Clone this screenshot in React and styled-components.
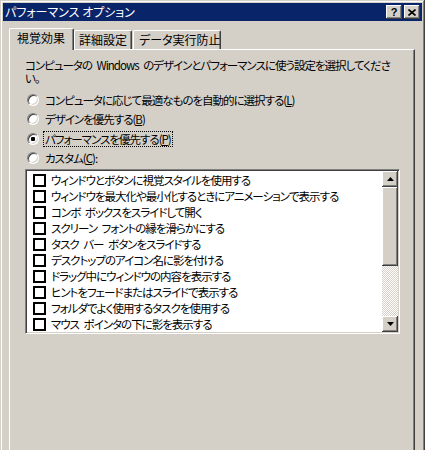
import React from 'react';
import styled, { createGlobalStyle, css } from 'styled-components';

const Global = createGlobalStyle`
html, body {
  margin: 0;
  padding: 0;
  overflow: hidden;
  background: #d4d0c8;
}
body {
  font-family: "Noto Sans CJK JP", "DejaVu Sans", sans-serif;
  font-size: 12px;
  font-feature-settings: "palt";
  color: #000;
}
`;

const raised = css`
box-shadow: inset -1px -1px #404040, inset 1px 1px #fff, inset -2px -2px #808080, inset 2px 2px #d4d0c8;
`;

const Window = styled.div`
box-sizing: border-box;
display: flex;
flex-direction: column;
width: 425px;
height: 450px;
overflow: hidden;
padding: 3px 3px 0;
background: #d4d0c8;
box-shadow: inset -1px 0 #404040, inset 0 1px #d4d0c8, inset -2px 0 #808080, inset 1px 0 #d4d0c8, inset 2px 2px #fff;
`;

const TitleBar = styled.div`
display: flex;
align-items: center;
flex: none;
height: 18px;
padding: 0 2px;
background: #0a246a;
color: #fff;
`;

const Title = styled.span`
flex: 1;
font-size: 12px;
line-height: 18px;
white-space: nowrap;
`;

const CapButton = styled.div`
display: flex;
align-items: center;
justify-content: center;
width: 16px;
height: 14px;
margin-left: ${p => p.$gap || 0}px;
background: #d4d0c8;
color: #000;
font-family: "Liberation Sans", sans-serif;
font-weight: bold;
font-size: 11px;
line-height: 14px;
${raised};
`;

const Content = styled.div`
display: flex;
flex-direction: column;
flex: 1;
padding: 7px 0 0 6px;
`;

const TabRow = styled.div`
display: flex;
align-items: flex-end;
flex: none;
height: 21px;
position: relative;
z-index: 1;
`;

const Tab = styled.div`
box-sizing: border-box;
height: ${p => (p.$active ? 22 : 19)}px;
width: ${p => p.$w}px;
margin-right: ${p => p.$mr || 0}px;
padding-left: ${p => p.$pl}px;
margin-bottom: ${p => (p.$active ? -1 : 0)}px;
background: #d4d0c8;
border-top: 1px solid #fff;
border-left: 1px solid #fff;
border-right: 1px solid #404040;
border-radius: 2px 2px 0 0;
box-shadow: inset -1px 0 #808080;
font-size: 12px;
line-height: 17px;
white-space: nowrap;
overflow: hidden;
`;

const Panel = styled.div`
box-sizing: border-box;
flex: 1;
width: 406px;
padding: 9px 0 0 15px;
background: #d4d0c8;
border-top: 1px solid #fff;
border-left: 1px solid #fff;
border-right: 1px solid #404040;
box-shadow: inset -1px 0 #808080;
font-size: 11.5px;
letter-spacing: -1px;
word-spacing: 3px;
`;

const Desc = styled.p`
margin: 0;
line-height: 13px;
white-space: nowrap;
`;

const Options = styled.div`
margin-top: 5px;
`;

const OptionRow = styled.div`
display: flex;
align-items: center;
height: 19.5px;
padding-left: 2px;
`;

const Radio = styled.span`
position: relative;
box-sizing: border-box;
width: 12px;
height: 12px;
flex: none;
border-radius: 50%;
border: 1px solid;
border-color: #808080 #fff #fff #808080;
background: #fff;
box-shadow: inset 1px 1px #404040, inset -1px -1px #d4d0c8;
margin-right: 4px;
${p => p.$checked && css`
&::after {
  content: '';
  position: absolute;
  left: 3px;
  top: 3px;
  width: 4px;
  height: 4px;
  border-radius: 1px;
  background: #000;
}
`}
`;

const Label = styled.span`
line-height: 14px;
padding: 0 1px;
border: 1px dotted ${p => (p.$focus ? '#000' : 'transparent')};
white-space: nowrap;
`;

const ListBox = styled.div`
box-sizing: border-box;
display: flex;
width: 375px;
height: 165px;
margin-top: 1px;
border: 1px solid;
border-color: #808080 #fff #fff #808080;
background: #fff;
box-shadow: inset 1px 1px #404040, inset -1px -1px #d4d0c8;
padding: 1px;
`;

const Items = styled.div`
flex: 1;
min-width: 0;
overflow: hidden;
padding-top: 1px;
`;

const Item = styled.div`
display: flex;
align-items: center;
height: 16px;
padding-left: 6px;
white-space: nowrap;
`;

const Check = styled.span`
box-sizing: border-box;
width: 13px;
height: 13px;
border: 2px solid #000;
background: #fff;
margin-right: 5px;
flex: none;
`;

const ScrollBar = styled.div`
display: flex;
flex-direction: column;
width: 16px;
flex: none;
`;

const ScrollBtn = styled.div`
display: flex;
align-items: center;
justify-content: center;
height: 16px;
background: #d4d0c8;
${raised};
`;

const Thumb = styled.div`
height: 79px;
background: #d4d0c8;
${raised};
`;

const Track = styled.div`
flex: 1;
background: repeating-conic-gradient(#d4d0c8 0 25%, #fff 0 50%) 0 0 / 2px 2px;
`;

const Arrow = ({ down }) => (
  <svg width="7" height="4" viewBox="0 0 7 4">
    <path d={down ? 'M0 0h7L3.5 4z' : 'M0 4h7L3.5 0z'} fill="#000" />
  </svg>
);

const items = [
  'ウィンドウとボタンに視覚スタイルを使用する',
  'ウィンドウを最大化や最小化するときにアニメーションで表示する',
  'コンボ ボックスをスライドして開く',
  'スクリーン フォントの縁を滑らかにする',
  'タスク バー ボタンをスライドする',
  'デスクトップのアイコン名に影を付ける',
  'ドラッグ中にウィンドウの内容を表示する',
  'ヒントをフェードまたはスライドで表示する',
  'フォルダでよく使用するタスクを使用する',
  'マウス ポインタの下に影を表示する',
];

const options = [
  { text: 'コンピュータに応じて最適なものを自動的に選択する(', key: 'L' },
  { text: 'デザインを優先する(', key: 'B' },
  { text: 'パフォーマンスを優先する(', key: 'P', checked: true },
  { text: 'カスタム(', key: 'C', tail: ':' },
];

export default function App() {
  return (
    <>
      <Global />
      <Window>
        <TitleBar>
          <Title>パフォーマンス オプション</Title>
          <CapButton>?</CapButton>
          <CapButton $gap={2}>
            <svg width="8" height="7" viewBox="0 0 8 7">
              <path d="M0.5 0.5L7.5 6.5M7.5 0.5L0.5 6.5" stroke="#000" strokeWidth="1.6" />
            </svg>
          </CapButton>
        </TitleBar>
        <Content>
          <TabRow>
            <Tab $active $w={65} $pl={7}>視覚効果</Tab>
            <Tab $w={58} $mr={1} $pl={4}>詳細設定</Tab>
            <Tab $w={88} $pl={5}>データ実行防止</Tab>
          </TabRow>
          <Panel>
            <Desc>
              コンピュータの Windows のデザインとパフォーマンスに使う設定を選択してくださ
              <br />い。
            </Desc>
            <Options>
              {options.map(o => (
                <OptionRow key={o.key}>
                  <Radio $checked={o.checked} />
                  <Label $focus={o.checked}>
                    {o.text}
                    <u>{o.key}</u>){o.tail}
                  </Label>
                </OptionRow>
              ))}
            </Options>
            <ListBox>
              <Items>
                {items.map(t => (
                  <Item key={t}>
                    <Check />
                    {t}
                  </Item>
                ))}
              </Items>
              <ScrollBar>
                <ScrollBtn><Arrow /></ScrollBtn>
                <Thumb />
                <Track />
                <ScrollBtn><Arrow down /></ScrollBtn>
              </ScrollBar>
            </ListBox>
          </Panel>
        </Content>
      </Window>
    </>
  );
}
